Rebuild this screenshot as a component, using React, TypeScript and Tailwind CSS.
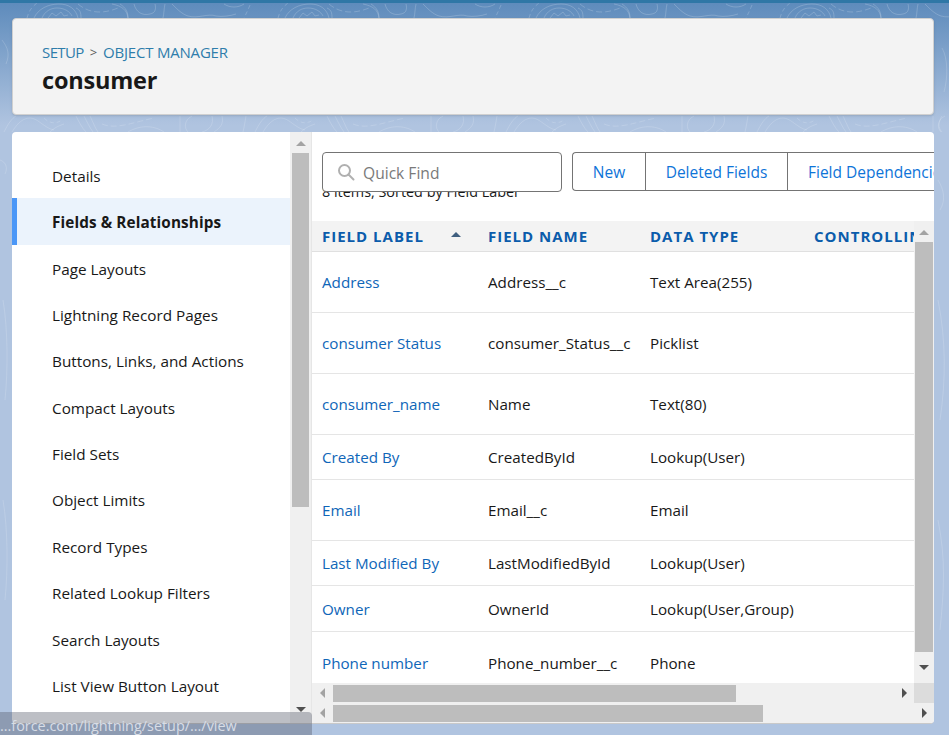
import React from "react";

const nav = ["Details","Fields & Relationships","Page Layouts","Lightning Record Pages","Buttons, Links, and Actions","Compact Layouts","Field Sets","Object Limits","Record Types","Related Lookup Filters","Search Layouts","List View Button Layout"];
const rows = [
  ["Address","Address__c","Text Area(255)","h-[61px]"],
  ["consumer Status","consumer_Status__c","Picklist","h-[61px]"],
  ["consumer_name","Name","Text(80)","h-[61px]"],
  ["Created By","CreatedById","Lookup(User)","h-[45px]"],
  ["Email","Email__c","Email","h-[61px]"],
  ["Last Modified By","LastModifiedById","Lookup(User)","h-[45px]"],
  ["Owner","OwnerId","Lookup(User,Group)","h-[46px]"],
  ["Phone number","Phone_number__c","Phone","h-[61px]"],
];

const Tri = ({ d, c = "#505050" }: { d: "u" | "d" | "l" | "r"; c?: string }) => {
  const p = { u: "0,8 5,3 10,8", d: "0,2 10,2 5,7", l: "7,0 7,10 2,5", r: "3,0 3,10 8,5" }[d];
  return <svg width="10" height="10" viewBox="0 0 10 10" className="block"><polygon points={p} fill={c} /></svg>;
};

const Topo = () => (
  <svg width="949" height="735" viewBox="0 0 949 735" fill="none" stroke="#ffffff" strokeWidth="0.8" className="absolute inset-0">
    {[-1, 0, 1, 2, 3].map((k) => (
      <g key={k} transform={`translate(${k * 251} 0)`}>
        <g strokeOpacity="0.24">
          <path d="M27 18c2-8 6-12 10-15" strokeDasharray="4 3" />
          <path d="M34 18c4-9 14-14 25-14c10 0 17 5 19 14" />
          <path d="M42 18c3-7 9-10 15-10c8 0 13 4 15 8" />
          <path d="M48 18l4-5l4 3l5-4l3 4l4-1" />
          <path d="M76 8c4 2 5 4 5 10" />
          <path d="M78 4c14 12 30 8 40 4" strokeDasharray="6 3" />
          <path d="M112 4c10 2 15 6 16 14" />
          <path d="M120 4c6 4 8 8 8 14" />
          <path d="M134 4c2 8 8 12 16 10c6-1 6-6 5-10" />
          <path d="M165 4c-1 4-1 10-2 14" />
          <path d="M172 4c6 6 10 10 16 12c10 3 20-3 28 0c6 1 14 0 20-2" />
          <path d="M224 4c6 4 14 4 20 0" />
          <path d="M250 5c-2 5-4 9-6 13" strokeDasharray="4 3" />
        </g>
        <g strokeOpacity="0.2">
          <path d="M4 132c4-8 8-14 12-16" />
          <path d="M12 132c6-10 12-14 18-14c8 0 14 10 24 12" />
          <path d="M44 118c6 6 12 6 18 2" strokeDasharray="4 3" />
          <path d="M50 132c4-4 8-6 14-8" />
          <path d="M76 116c3 6 6 12 10 16" /><path d="M84 116c3 6 6 12 9 16" /><path d="M90 116c3 6 5 12 8 16" />
          <path d="M102 124c14 6 32-2 52-6" strokeDasharray="6 3" />
          <path d="M128 132c10-6 24-8 36 0" />
          <path d="M180 116v16" />
          <path d="M192 116c-8 4-8 12-4 16" />
          <path d="M212 116c2 8-2 14-10 16" /><path d="M222 116c2 8-2 12-8 16" />
          <path d="M246 116c-1 6-2 12-3 16" />
        </g>
      </g>
    ))}
    <g strokeOpacity="0.2">
      <path d="M2 40c6 8 8 14 4 24" /><path d="M0 160c6 2 8 8 5 14" /><path d="M942 48c6 10 6 30 2 44" />
      <path d="M938 180c6 10 8 20 2 30" /><path d="M938 300c8 40 8 80 2 120" /><path d="M3 300c5 30 5 70 2 100" />
      <path d="M942 116c-4 6-4 12 0 16" /><path d="M3 500c5 30 5 70 2 100" /><path d="M938 520c8 40 6 70 2 110" />
    </g>
  </svg>
);

export default function App() {
  return (
    <div className="relative w-[949px] h-[735px] overflow-hidden bg-[linear-gradient(#5c8abb_0px,#b0c4e0_125px)] font-['Open_Sans','Noto_Sans',sans-serif] text-[15.3px] text-[#181818]">
      <Topo />
      <div className="relative flex flex-col h-full">
        <div className="h-[3px] bg-[#2f77a6]" />
        <header className="mt-[15px] ml-3 w-[922px] h-[97px] rounded bg-[#f3f3f3] border border-[#d0d0d0] shadow-sm pl-[29px] pt-[23px]">
          <div className="flex items-center text-[15px] leading-5 text-[#2e7dab] tracking-[-0.2px]">
            <span className="tracking-[-0.6px]">SETUP</span><span className="mx-[6px] text-[#5c5c5c] text-[13px]">&gt;</span><span>OBJECT MANAGER</span>
          </div>
          <h1 className="mt-[4px] text-[23.5px] leading-7 font-bold text-[#181818] tracking-[-0.2px]">consumer</h1>
        </header>
        <main className="mt-[17px] ml-3 w-[922px] h-[592px] flex rounded bg-white overflow-hidden border-b border-[#c9c9c9]">
          <nav className="w-[278px] pt-[20px] shrink-0">
            {nav.map((n, i) => (
              <div key={n} className={`h-[46.4px] flex items-center pt-[2px] pl-10 whitespace-nowrap ${i === 1 ? "bg-[#ebf3fc] border-l-[5px] border-[#4b97f7] pl-[35px] font-bold tracking-[0.1px]" : ""}`}>{n}</div>
            ))}
          </nav>
          <div className="w-[22px] shrink-0 bg-[#f0f0f0] border-r border-[#e6e6e6] flex flex-col items-center pl-[2px] pr-[2px]">
            <div className="h-[21px] flex items-center justify-center"><Tri d="u" c="#a3a3a3" /></div>
            <div className="w-full h-[354px] bg-[#bdbdbd]" />
            <div className="flex-1" />
            <div className="h-[18px] flex items-start justify-center"><Tri d="d" /></div>
          </div>
          <section className="flex-1 min-w-0 flex flex-col">
            <div className="h-[89px] relative pl-[10px] pt-[20px] overflow-hidden">
              <div className="absolute left-[10px] top-[50px] text-[14.4px] leading-5">8 items, Sorted by Field Label</div>
              <div className="relative flex items-start gap-[10px]">
                <div className="w-[240px] h-[40px] shrink-0 rounded border border-[#747474] bg-white flex items-center pl-[14px] gap-[8px] text-[#7a7a7a] text-[15.6px]">
                  <svg width="18" height="18" viewBox="0 0 18 18" fill="none" stroke="#b0b0b0" strokeWidth="2"><circle cx="7.5" cy="7.5" r="5.5" /><path d="M11.5 11.5L16.5 16.5" strokeLinecap="round" /></svg>
                  <span className="pt-[3px]">Quick Find</span>
                </div>
                <div className="flex h-[39px] shrink-0 rounded-l border border-r-0 border-[#747474] text-[#0e74d8] text-[15.5px] whitespace-nowrap">
                  <div className="w-[72px] shrink-0 flex items-center justify-center pt-[2px]">New</div>
                  <div className="w-[142px] shrink-0 flex items-center justify-center border-l border-[#747474] pt-[2px]">Deleted Fields</div>
                  <div className="pl-5 border-l border-[#747474] flex items-center pt-[2px]">Field Dependencies</div>
                </div>
              </div>
            </div>
            <div className="flex-1 min-h-0 flex flex-col">
              <div className="flex-1 min-h-0 flex">
                <div className="flex-1 min-w-0 overflow-hidden flex flex-col">
                  <div className="h-[31px] shrink-0 flex items-center bg-[#f3f3f3] border-b border-[#e0e0e0] text-[15px] font-bold tracking-[1px] text-[#0b5cab] whitespace-nowrap">
                    <div className="w-[166px] shrink-0 pl-[10px] relative">FIELD LABEL<span className="absolute left-[139px] top-[4px]"><Tri d="u" c="#3f5f7f" /></span></div>
                    <div className="w-[162px] shrink-0 pl-[10px]">FIELD NAME</div>
                    <div className="w-[164px] shrink-0 pl-[10px]">DATA TYPE</div>
                    <div className="pl-[10px]">CONTROLLING FIELD</div>
                  </div>
                  {rows.map(([a, b, c, h], i) => (
                    <div key={a} className={`${h} shrink-0 flex items-center pt-px text-[15.2px] whitespace-nowrap ${i < 7 ? "border-b border-[#e5e5e5]" : ""}`}>
                      <div className="w-[166px] shrink-0 pl-[10px] text-[#0f66b8]">{a}</div>
                      <div className="w-[162px] shrink-0 pl-[10px]">{b}</div>
                      <div className="w-[164px] shrink-0 pl-[10px]">{c}</div>
                    </div>
                  ))}
                </div>
                <div className="w-[20px] shrink-0 bg-[#f0f0f0] flex flex-col items-center px-px">
                  <div className="h-[21px] flex items-center justify-center"><Tri d="u" c="#a3a3a3" /></div>
                  <div className="w-full h-[410px] bg-[#bdbdbd]" />
                  <div className="flex-1 flex items-center justify-center"><Tri d="d" /></div>
                </div>
              </div>
              <div className="h-[20px] shrink-0 flex bg-[#f0f0f0]">
                <div className="flex-1 flex items-center">
                  <div className="w-[21px] flex justify-center"><Tri d="l" c="#a3a3a3" /></div>
                  <div className="w-[403px] h-[17px] bg-[#bdbdbd]" />
                  <div className="flex-1" />
                  <div className="w-[21px] flex justify-center"><Tri d="r" /></div>
                </div>
                <div className="w-[20px] bg-[#dcdcdc]" />
              </div>
              <div className="h-[20px] shrink-0 flex items-center bg-[#f0f0f0]">
                <div className="w-[21px] flex justify-center"><Tri d="l" c="#a3a3a3" /></div>
                <div className="w-[430px] h-[17px] bg-[#bdbdbd]" />
                <div className="flex-1" />
                <div className="w-[21px] flex justify-center"><Tri d="r" /></div>
              </div>
            </div>
          </section>
        </main>
      </div>
      <div className="absolute left-0 bottom-0 w-[312px] h-[23px] rounded-tr bg-[#5a5f6e]/40 text-[#d8dde6] text-[14.4px] leading-[27px] whitespace-nowrap overflow-hidden">...force.com/lightning/setup/.../view</div>
    </div>
  );
}
